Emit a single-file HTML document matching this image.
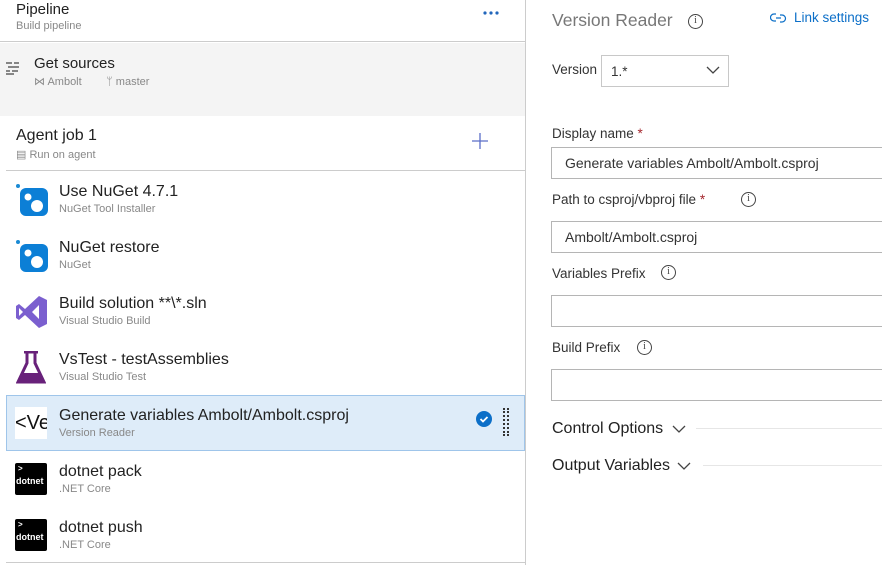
<!DOCTYPE html>
<html><head><meta charset="utf-8"><style>
*{box-sizing:border-box;margin:0;padding:0}
body{width:882px;height:565px;overflow:hidden;background:#fff;font-family:"Liberation Sans",sans-serif;color:#333;position:relative}
.a{position:absolute}
.t{font-size:16px;color:#222;white-space:nowrap}
.s{font-size:11px;color:#888;white-space:nowrap}
.lbl{font-size:13.5px;color:#333;white-space:nowrap}
.inp{position:absolute;left:551px;width:340px;height:32px;border:1px solid #b5b5b5;font-size:14px;color:#333;padding:7px 13px;white-space:nowrap}
.info{position:absolute;width:15px;height:15px;border:1.2px solid #444;border-radius:50%;font-size:10px;text-align:center;line-height:12px;color:#444;font-family:"Liberation Serif",serif}
.dn{position:absolute;left:15px;width:32px;height:32px;background:#000;color:#fff;font-size:9px;font-weight:bold;border-radius:2px}
</style></head><body>
<div class="a" style="left:0;top:0;width:525px;height:42px;border-bottom:1px solid #ccc"></div>
<div class="a" style="left:16px;top:1px;font-size:15px;color:#222">Pipeline</div>
<div class="a s" style="left:16px;top:20px">Build pipeline</div>
<svg class="a" style="left:483px;top:10px" width="16" height="6"><circle cx="2" cy="3" r="1.6" fill="#2266bb"/><circle cx="8" cy="3" r="1.6" fill="#2266bb"/><circle cx="14" cy="3" r="1.6" fill="#2266bb"/></svg>
<div class="a" style="left:0;top:43px;width:525px;height:73px;background:#f4f4f4"></div>
<svg class="a" style="left:5px;top:60px" width="16" height="16"><path d="M1 3h6M9 3h5M3 7h11M1 11h4M7 11h6M1 14h8" stroke="#444" stroke-width="1.2"/></svg>
<div class="a" style="left:34px;top:55px;font-size:15px;color:#222">Get sources</div>
<div class="a s" style="left:34px;top:75px;color:#888">⋈ Ambolt &nbsp;&nbsp;&nbsp;&nbsp;&nbsp;&nbsp;&nbsp;ᛘ master</div>
<div class="a" style="left:6px;top:116px;width:519px;height:447px;background:#fff;border-bottom:1px solid #ccc"></div>
<div class="a" style="left:16px;top:127px;font-size:16px;color:#222">Agent job 1</div>
<div class="a s" style="left:16px;top:148px">▤ Run on agent</div>
<svg class="a" style="left:472px;top:133px" width="16" height="16"><path d="M8 0v16M0 8h16" stroke="#5a6ec8" stroke-width="1.3"/></svg>
<div class="a" style="left:6px;top:170px;width:519px;border-top:1px solid #ccc"></div>
<div class="a" style="left:6px;top:395px;width:519px;height:56px;background:#deecf9;border:1px solid #9fc5ea"></div>

<svg class="a" style="left:15px;top:183px" width="34" height="34"><circle cx="3" cy="3" r="2" fill="#1a8ad4"/><rect x="5" y="5" width="28" height="28" rx="6" fill="#0c7fd6"/><circle cx="13" cy="14" r="3.5" fill="#fff"/><circle cx="22" cy="23" r="6" fill="#fff"/></svg>
<div class="a t" style="left:59px;top:183px">Use NuGet 4.7.1</div><div class="a s" style="left:59px;top:203px">NuGet Tool Installer</div>
<svg class="a" style="left:15px;top:239px" width="34" height="34"><circle cx="3" cy="3" r="2" fill="#1a8ad4"/><rect x="5" y="5" width="28" height="28" rx="6" fill="#0c7fd6"/><circle cx="13" cy="14" r="3.5" fill="#fff"/><circle cx="22" cy="23" r="6" fill="#fff"/></svg>
<div class="a t" style="left:59px;top:239px">NuGet restore</div><div class="a s" style="left:59px;top:259px">NuGet</div>
<svg class="a" style="left:15px;top:295px" width="33" height="34"><path d="M24 1l8 4v24l-8 4L10 20l-6 5-3-2V11l3-2 6 5zM24 10l-7 7 7 7zM4 13v8l4-4z" fill="#7b5fcf" fill-rule="evenodd"/></svg>
<div class="a t" style="left:59px;top:295px">Build solution **\*.sln</div><div class="a s" style="left:59px;top:315px">Visual Studio Build</div>
<svg class="a" style="left:16px;top:351px" width="30" height="34"><path d="M8 1h14M11 1v11L2 31h26L19 12V1" fill="none" stroke="#68217a" stroke-width="3"/><path d="M7 22h16l4 8H3z" fill="#68217a"/></svg>
<div class="a t" style="left:59px;top:351px">VsTest - testAssemblies</div><div class="a s" style="left:59px;top:371px">Visual Studio Test</div>
<div class="a" style="left:15px;top:407px;width:32px;height:32px;background:#fff;overflow:hidden;font-size:20px;color:#111;line-height:32px;white-space:nowrap">&lt;Ve</div>
<div class="a t" style="left:59px;top:407px">Generate variables Ambolt/Ambolt.csproj</div><div class="a s" style="left:59px;top:427px">Version Reader</div>
<svg class="a" style="left:476px;top:411px" width="16" height="16"><circle cx="8" cy="8" r="8" fill="#0c6fc8"/><path d="M4.5 8l2.5 2.5 4.5-4.5" stroke="#fff" stroke-width="1.8" fill="none"/></svg>
<div class="a" style="left:503px;top:408px;width:2px;height:28px;border-left:2px dotted #333"></div>
<div class="a" style="left:507px;top:408px;width:2px;height:28px;border-left:2px dotted #333"></div>
<div class="dn" style="top:463px"><div style="position:absolute;left:3px;top:1px;font-size:8px">&gt;</div><div style="position:absolute;left:1px;top:13px">dotnet</div></div>
<div class="a t" style="left:59px;top:463px">dotnet pack</div><div class="a s" style="left:59px;top:483px">.NET Core</div>
<div class="dn" style="top:519px"><div style="position:absolute;left:3px;top:1px;font-size:8px">&gt;</div><div style="position:absolute;left:1px;top:13px">dotnet</div></div>
<div class="a t" style="left:59px;top:519px">dotnet push</div><div class="a s" style="left:59px;top:539px">.NET Core</div>

<div class="a" style="left:525px;top:0;width:1px;height:565px;background:#ccc"></div>

<div class="a" style="left:552px;top:10px;font-size:17.5px;color:#777;white-space:nowrap">Version Reader</div>
<div class="info" style="left:688px;top:14px">i</div>
<svg class="a" style="left:770px;top:12px" width="18" height="12"><path d="M6 2H4a3.5 3.5 0 000 7h2M10 3h2a3.5 3.5 0 010 7h-2M6 6h5" stroke="#0c6fc8" stroke-width="1.2" fill="none"/></svg>
<div class="a" style="left:794px;top:10px;font-size:13.5px;color:#0c6fc8">Link settings</div>
<div class="a lbl" style="left:552px;top:62px">Version</div>
<div class="a" style="left:601px;top:55px;width:128px;height:32px;border:1px solid #c8c8c8;font-size:13.5px;padding:8px 9px">1.*</div>
<svg class="a" style="left:706px;top:66px" width="14" height="9"><path d="M1 1l6 6 6-6" stroke="#444" stroke-width="1.3" fill="none"/></svg>
<div class="a lbl" style="left:552px;top:126px">Display name <span style="color:#a4262c">*</span></div>
<div class="inp" style="top:147px">Generate variables Ambolt/Ambolt.csproj</div>
<div class="a lbl" style="left:552px;top:192px">Path to csproj/vbproj file <span style="color:#a4262c">*</span></div>
<div class="info" style="left:741px;top:192px">i</div>
<div class="inp" style="top:221px">Ambolt/Ambolt.csproj</div>
<div class="a lbl" style="left:552px;top:266px">Variables Prefix</div>
<div class="info" style="left:661px;top:265px">i</div>
<div class="inp" style="top:295px"></div>
<div class="a lbl" style="left:552px;top:340px">Build Prefix</div>
<div class="info" style="left:637px;top:340px">i</div>
<div class="inp" style="top:369px"></div>
<div class="a" style="left:552px;top:420px;font-size:16px;color:#222">Control Options</div>
<svg class="a" style="left:672px;top:425px" width="14" height="9"><path d="M1 1l6 6 6-6" stroke="#444" stroke-width="1.3" fill="none"/></svg>
<div class="a" style="left:696px;top:428px;width:186px;border-top:1px solid #e6e6e6"></div>
<div class="a" style="left:552px;top:457px;font-size:16px;color:#222">Output Variables</div>
<svg class="a" style="left:677px;top:462px" width="14" height="9"><path d="M1 1l6 6 6-6" stroke="#444" stroke-width="1.3" fill="none"/></svg>
<div class="a" style="left:703px;top:465px;width:179px;border-top:1px solid #e6e6e6"></div>
</body></html>
